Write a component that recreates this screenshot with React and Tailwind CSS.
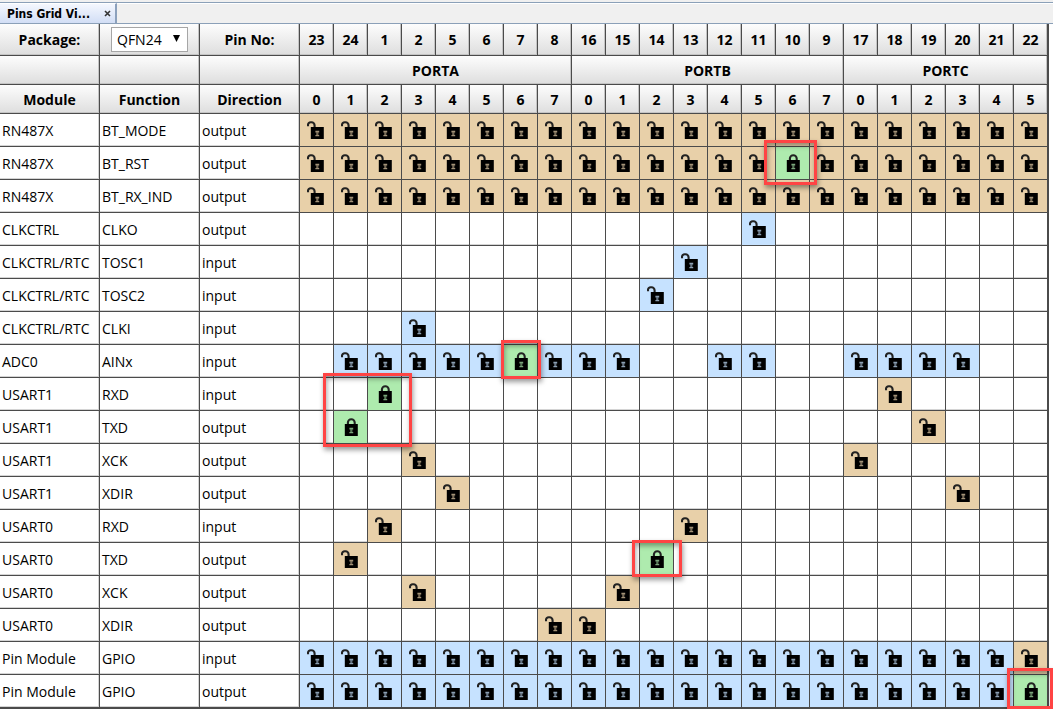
import React from "react";

const PINS = [23, 24, 1, 2, 5, 6, 7, 8, 16, 15, 14, 13, 12, 11, 10, 9, 17, 18, 19, 20, 21, 22];

const PORTS = [
  { name: "PORTA", pins: 8 },
  { name: "PORTB", pins: 8 },
  { name: "PORTC", pins: 6 },
];

const range = (from, to) => Array.from({ length: to - from + 1 }, (_, i) => from + i);

// shared: tan cells, open: blue cells, locked: green cells
const ROWS = [
  { module: "RN487X", fn: "BT_MODE", dir: "output", shared: range(0, 21) },
  { module: "RN487X", fn: "BT_RST", dir: "output", shared: range(0, 21), locked: [14], mark: { 14: "-top-[7px] -left-3 -right-2 -bottom-1.5" } },
  { module: "RN487X", fn: "BT_RX_IND", dir: "output", shared: range(0, 21) },
  { module: "CLKCTRL", fn: "CLKO", dir: "output", open: [13] },
  { module: "CLKCTRL/RTC", fn: "TOSC1", dir: "input", open: [11] },
  { module: "CLKCTRL/RTC", fn: "TOSC2", dir: "input", open: [10] },
  { module: "CLKCTRL/RTC", fn: "CLKI", dir: "input", open: [3] },
  { module: "ADC0", fn: "AINx", dir: "input", open: [1, 2, 3, 4, 5, 7, 8, 9, 12, 13, 16, 17, 18, 19], locked: [6], mark: { 6: "-top-[5px] -left-[3px] -right-1 -bottom-0.5" } },
  { module: "USART1", fn: "RXD", dir: "input", shared: [17], locked: [2] },
  { module: "USART1", fn: "TXD", dir: "output", shared: [18], locked: [1], mark: { 1: "-top-[38px] -left-[11px] -right-[45px] -bottom-1" } },
  { module: "USART1", fn: "XCK", dir: "output", shared: [3, 16] },
  { module: "USART1", fn: "XDIR", dir: "output", shared: [4, 19] },
  { module: "USART0", fn: "RXD", dir: "input", shared: [2, 11] },
  { module: "USART0", fn: "TXD", dir: "output", shared: [1], locked: [10], mark: { 10: "-top-[3px] -left-2 -right-[9px] -bottom-0.5" } },
  { module: "USART0", fn: "XCK", dir: "output", shared: [3, 9] },
  { module: "USART0", fn: "XDIR", dir: "output", shared: [7, 8] },
  { module: "Pin Module", fn: "GPIO", dir: "input", open: range(0, 20), shared: [21] },
  { module: "Pin Module", fn: "GPIO", dir: "output", open: range(0, 20), locked: [21], mark: { 21: "-top-[7px] -left-[7px] -right-1.5 -bottom-0.5" } },
];

const CELL_COLORS = {
  shared: "bg-[#e8d0a9]",
  open: "bg-[#c6e2ff]",
  locked: "bg-[#aeebae]",
};

const LINE = "border-r border-b border-[#4b4b4b]";
const HEAD_BASE = `${LINE} bg-linear-to-b from-[#fdfdfd] to-[#dedede] text-center font-bold shadow-[inset_-1px_-1px_0_#c4c4c4]`;
const HEAD_TOP = `${HEAD_BASE} p-0`;
const HEAD = `${HEAD_BASE} px-0 pt-0.5 pb-0`;

function PadlockIcon({ locked }) {
  return (
    <svg viewBox="0 0 19 18" className="h-[18px] w-[19px]" aria-hidden="true">
      <path
        d={locked ? "M6.9 7V4.6a3.4 3.4 0 0 1 6.8 0V7" : "M1 5.2V4A2.7 2.7 0 0 1 3.7 1.3H4.5A3.1 3.1 0 0 1 7.6 4.4V7"}
        fill="none"
        stroke="#222"
        strokeWidth="2.1"
      />
      <path d="M3.8 6H16.8V18H3.8z" fill="#000" />
      <path d="M8.4 9.8h3.8v1.6H8.4zM8.4 14h3.8v1.3H8.4z" fill="currentColor" opacity=".7" />
      <path d="M9.2 11.4h2.2v2.6H9.2z" fill="currentColor" opacity=".5" />
    </svg>
  );
}

function PinCell({ row, index }) {
  const state = row.locked?.includes(index)
    ? "locked"
    : row.open?.includes(index)
      ? "open"
      : row.shared?.includes(index)
        ? "shared"
        : null;
  if (!state) {
    return <td className={`${LINE} bg-white p-0 shadow-[inset_0_-1px_0_#d4d4d4]`} />;
  }
  const mark = row.mark?.[index];
  const locked = state === "locked";
  return (
    <td className={`${LINE} ${CELL_COLORS[state]} relative p-0`}>
      <button
        type="button"
        aria-pressed={locked}
        aria-label={`${row.module} ${row.fn} ${row.dir}, pin ${PINS[index]}`}
        className={`flex w-full items-center justify-center ${
          state === "shared" ? "text-[#e8d0a9]" : locked ? "text-[#aeebae]" : "text-[#c6e2ff]"
        }`}
      >
        <PadlockIcon locked={locked} />
      </button>
      {mark && (
        <span
          className={`pointer-events-none absolute z-10 border-3 border-[#ff4444] shadow-[1px_3px_5px_rgba(0,0,0,0.4),inset_1px_3px_5px_rgba(0,0,0,0.35)] ${mark}`}
        />
      )}
    </td>
  );
}

export default function App() {
  return (
    <main className="overflow-hidden bg-white font-['Open_Sans','Noto_Sans',sans-serif] text-sm text-black">
      <div className="h-0.5 bg-[#f0f0f0]" />
      <div role="tablist" className="flex h-[22px] items-stretch border-t border-b border-[#8ba0b8] bg-[#f0f0f0]">
        <div className="flex w-[117px] items-center justify-between border-t border-r-2 border-t-white border-r-[#8ba0bc] bg-linear-to-b from-[#f4f7fe] to-[#d2def5] pr-1 pl-[7px]">
          <button type="button" role="tab" aria-selected="true" className="font-['DejaVu_Sans_Condensed','DejaVu_Sans',sans-serif] text-[12px] leading-4 font-bold whitespace-nowrap">
            Pins Grid Vi...
          </button>
          <button type="button" aria-label="Close tab" className="flex size-2 items-center justify-center">
            <svg viewBox="0 0 7 7" className="size-[7px]" aria-hidden="true">
              <path d="M1 1l5 5M6 1L1 6" stroke="#333" strokeWidth="1.6" />
            </svg>
          </button>
        </div>
        <div className="flex-1 border-t border-white" />
      </div>

      <div className="pr-1">
        <table className="w-full table-fixed border-separate border-spacing-0 border-r border-b border-[#4b4b4b]">
          <colgroup>
            <col className="w-[100px]" />
            <col className="w-[100px]" />
            <col className="w-[100px]" />
            {PINS.map((pin) => (
              <col key={pin} />
            ))}
          </colgroup>
          <thead>
            <tr className="h-8">
              <th className={HEAD_TOP}>
                <label htmlFor="package">Package:</label>
              </th>
              <th className={HEAD_TOP}>
                <div className="relative mx-auto h-[25px] w-[77px]">
                  <select
                    id="package"
                    defaultValue="QFN24"
                    className="block h-full w-full appearance-none border border-[#a6a6a6] bg-white pl-[5px] text-sm font-normal"
                  >
                    <option>QFN24</option>
                  </select>
                  <svg viewBox="0 0 7 7" className="pointer-events-none absolute top-2 right-2 size-[7px]" aria-hidden="true">
                    <path d="M0 0h7L3.5 7z" fill="#000" />
                  </svg>
                </div>
              </th>
              <th className={HEAD_TOP}>Pin No:</th>
              {PINS.map((pin) => (
                <th key={pin} className={HEAD_TOP}>{pin}</th>
              ))}
            </tr>
            <tr className="h-[29px]">
              <td className={HEAD} />
              <td className={HEAD} />
              <td className={HEAD} />
              {PORTS.map((port) => (
                <th key={port.name} colSpan={port.pins} className={HEAD}>{port.name}</th>
              ))}
            </tr>
            <tr className="h-[29px]">
              <th className={HEAD}>Module</th>
              <th className={HEAD}>Function</th>
              <th className={HEAD}>Direction</th>
              {PORTS.map((port) =>
                range(0, port.pins - 1).map((bit) => (
                  <th key={port.name + bit} className={HEAD}>{bit}</th>
                ))
              )}
            </tr>
          </thead>
          <tbody>
            {ROWS.map((row, i) => (
              <tr key={i} className="h-[33px]">
                {[row.module, row.fn, row.dir].map((text, c) => (
                  <td key={c} className={`${LINE} bg-white pt-0.5 pr-0 pb-0 pl-0.5 whitespace-nowrap shadow-[inset_-1px_-1px_0_#d4d4d4]`}>
                    {text}
                  </td>
                ))}
                {PINS.map((pin, index) => (
                  <PinCell key={pin} row={row} index={index} />
                ))}
              </tr>
            ))}
          </tbody>
        </table>
      </div>
    </main>
  );
}
